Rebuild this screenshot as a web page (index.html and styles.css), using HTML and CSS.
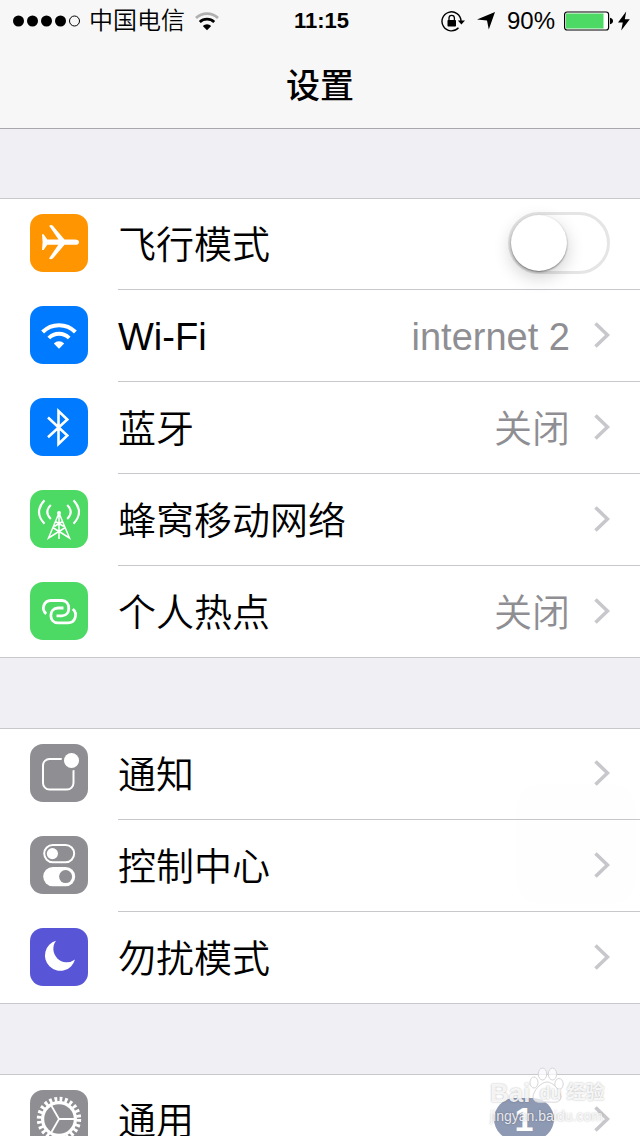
FILE: index.html
```html
<!DOCTYPE html>
<html lang="zh-CN">
<head>
    <meta charset="UTF-8">
    <meta name="viewport" content="width=device-width, initial-scale=1.0">
    <title>设置</title>
    <link rel="stylesheet" href="styles.css">
</head>
<body>
    <!-- shared chevron -->
    <svg class="defs" aria-hidden="true">
        <symbol id="chevron" viewBox="0 0 16 26">
            <path d="M1.5 1.5L13.5 13L1.5 24.5" fill="none" stroke="#c7c7cc" stroke-width="3.6"/>
        </symbol>
    </svg>

    <div class="screen">
        <header class="header">
            <div class="status-bar">
                <div class="status-left">
                    <svg class="signal" width="68" height="12" viewBox="0 0 68 12">
                        <circle cx="5.5" cy="6" r="5.5"/>
                        <circle cx="19.5" cy="6" r="5.5"/>
                        <circle cx="33.5" cy="6" r="5.5"/>
                        <circle cx="47.5" cy="6" r="5.5"/>
                        <circle cx="61.5" cy="6" r="5" fill="none" stroke="#000"/>
                    </svg>
                    <span class="carrier">中国电信</span>
                    <svg width="26" height="20" viewBox="0 0 26 20" fill="none">
                        <path d="M2 7A16 16 0 0 1 24 7" stroke="#b0b0b0" stroke-width="2.8"/>
                        <path d="M5.8 11A10.5 10.5 0 0 1 20.2 11" stroke="#000" stroke-width="2.8"/>
                        <path d="M13 19.2L8.8 15A6 6 0 0 1 17.2 15Z" fill="#000"/>
                    </svg>
                </div>
                <div class="time">11:15</div>
                <div class="status-right">
                    <svg width="24" height="22" viewBox="0 0 24 22">
                        <path d="M17.5 17.8A9.5 9.5 0 1 1 20 11" fill="none" stroke="#000" stroke-width="1.4"/>
                        <path d="M16.8 10.5H24L20.4 14.5Z"/>
                        <rect x="6.5" y="10" width="8.5" height="6.5" rx="0.8"/>
                        <path d="M8 10.5V8A2.7 2.7 0 0 1 13.4 8V10.5" fill="none" stroke="#000" stroke-width="1.3"/>
                    </svg>
                    <svg class="location" width="18" height="18" viewBox="0 0 18 18">
                        <path d="M18 0L11.8 17.5L10 8.5L0 7.6Z"/>
                    </svg>
                    <span class="percent">90%</span>
                    <svg width="50" height="20" viewBox="0 0 50 20">
                        <rect x="0.6" y="1" width="44" height="18" rx="2.5" fill="#fff" stroke="#000" stroke-width="1.2"/>
                        <rect x="2" y="2.5" width="37.5" height="15" fill="#4cd964"/>
                        <path d="M46 6.8Q49 7.5 49 10Q49 12.5 46 13.2Z"/>
                    </svg>
                    <svg class="bolt" width="12" height="20" viewBox="0 0 12 20">
                        <path d="M8.2 0.5L0 11.5H4.8L3.2 19.5L11.8 8.3H6.8Z"/>
                    </svg>
                </div>
            </div>
            <h1 class="title">设置</h1>
        </header>

        <main>
            <ul class="group">
                <li class="row">
                    <svg class="icon orange" viewBox="0 0 58 58">
                        <path d="M12 20.3H13.6L17.3 25.6H28.5L19.3 12Q19.3 11 21.5 11Q22.6 11.2 23.5 12.4L34.5 25.5H45Q49 25.7 49 28.2Q49 30.7 45 30.8H34.5L23.5 43.8Q22.5 45.2 21 45.2Q18.8 45.2 19.3 44L28.3 30.8H17.3L13.6 36H12L12.6 28.2Z" fill="#fff"/>
                    </svg>
                    <div class="cell">
                        <label class="label" for="airplane">飞行模式</label>
                        <input class="switch" type="checkbox" id="airplane">
                    </div>
                </li>
                <li>
                    <a class="row" href="#">
                        <svg class="icon blue" viewBox="0 0 58 58" fill="none" stroke="#fff">
                            <path d="M12.6 26A23 23 0 0 1 45.4 26" stroke-width="4"/>
                            <path d="M18.8 32A14.4 14.4 0 0 1 39.2 32" stroke-width="3.8"/>
                            <path d="M29 42.8L23.8 37.4A7.5 7.5 0 0 1 34.2 37.4Z" fill="#fff" stroke="none"/>
                        </svg>
                        <div class="cell">
                            <span class="label">Wi-Fi</span>
                            <span class="value">internet 2</span>
                            <svg class="chevron"><use href="#chevron"/></svg>
                        </div>
                    </a>
                </li>
                <li>
                    <a class="row" href="#">
                        <svg class="icon blue" viewBox="0 0 58 58" fill="none" stroke="#fff" stroke-width="2.6">
                            <path d="M18 19.5L37.3 37.5L28.5 46V13L37.3 21.5L18 39.2"/>
                        </svg>
                        <div class="cell">
                            <span class="label">蓝牙</span>
                            <span class="value">关闭</span>
                            <svg class="chevron"><use href="#chevron"/></svg>
                        </div>
                    </a>
                </li>
                <li>
                    <a class="row" href="#">
                        <svg class="icon green" viewBox="0 0 58 58" fill="none" stroke="#fff">
                            <path d="M14.5 10.3Q3.5 22 14.5 33.8M43.5 10.3Q54.5 22 43.5 33.8M20.8 15Q13.8 22 20.8 29M37.2 15Q44.2 22 37.2 29" stroke-width="2.1"/>
                            <circle cx="29" cy="23" r="2" fill="#fff" stroke="none"/>
                            <path d="M29 23L18.5 48L34.5 38M29 23L39.5 48L23.5 38M29 23V49M25.5 31.5L33.8 36.5M32.5 31.5L24.2 36.5" stroke-width="1.5"/>
                        </svg>
                        <div class="cell">
                            <span class="label">蜂窝移动网络</span>
                            <svg class="chevron"><use href="#chevron"/></svg>
                        </div>
                    </a>
                </li>
                <li>
                    <a class="row" href="#">
                        <svg class="icon green" viewBox="0 0 58 58" fill="none" stroke="#fff" stroke-width="2.8">
                            <path d="M16.2 31.8C11 27.5 13.5 18.5 21 18.5H32C41 18.5 41 33.8 32 33.8H26.5"/>
                            <path d="M42.8 27C48 31.5 45.5 40.8 38 40.8H28C18.5 40.8 18.5 26 28 26H33.5"/>
                        </svg>
                        <div class="cell">
                            <span class="label">个人热点</span>
                            <span class="value">关闭</span>
                            <svg class="chevron"><use href="#chevron"/></svg>
                        </div>
                    </a>
                </li>
            </ul>

            <ul class="group">
                <li>
                    <a class="row" href="#">
                        <svg class="icon gray" viewBox="0 0 58 58">
                            <rect x="13" y="15" width="30.5" height="30.5" rx="6.5" fill="none" stroke="#fff" stroke-width="2"/>
                            <circle cx="41.5" cy="16.5" r="10" fill="#8e8e93"/>
                            <circle cx="41.5" cy="16.5" r="7.5" fill="#fff"/>
                        </svg>
                        <div class="cell">
                            <span class="label">通知</span>
                            <svg class="chevron"><use href="#chevron"/></svg>
                        </div>
                    </a>
                </li>
                <li>
                    <a class="row" href="#">
                        <svg class="icon gray" viewBox="0 0 58 58">
                            <rect x="14.2" y="9" width="30" height="17.2" rx="8.6" fill="none" stroke="#fff" stroke-width="2"/>
                            <circle cx="22.4" cy="17.6" r="5.6" fill="#fff"/>
                            <rect x="13.2" y="31" width="32" height="19.2" rx="9.6" fill="#fff"/>
                            <circle cx="35.6" cy="40.6" r="6.5" fill="#8e8e93"/>
                        </svg>
                        <div class="cell">
                            <span class="label">控制中心</span>
                            <svg class="chevron"><use href="#chevron"/></svg>
                        </div>
                    </a>
                </li>
                <li>
                    <a class="row" href="#">
                        <svg class="icon purple" viewBox="0 0 58 58">
                            <path d="M26 12.8A15.3 15.3 0 1 0 45 31.6A13.5 13.5 0 0 1 26 12.8Z" fill="#fff"/>
                        </svg>
                        <div class="cell">
                            <span class="label">勿扰模式</span>
                            <svg class="chevron"><use href="#chevron"/></svg>
                        </div>
                    </a>
                </li>
            </ul>

            <ul class="group">
                <li>
                    <a class="row" href="#">
                        <svg class="icon gray" viewBox="0 0 58 58" fill="none" stroke="#fff">
                            <circle cx="29" cy="29" r="19.8" stroke-width="4.8" stroke-dasharray="2.8 2.384"/>
                            <circle cx="29" cy="29" r="16.4" stroke-width="3.2"/>
                            <path d="M29 29H44M29 29L21.5 16M29 29L21.5 42" stroke-width="1.8"/>
                        </svg>
                        <div class="cell">
                            <span class="label">通用</span>
                            <span class="badge">1</span>
                            <svg class="chevron"><use href="#chevron"/></svg>
                        </div>
                    </a>
                </li>
            </ul>
        </main>

        <button class="assistive" type="button" aria-label="AssistiveTouch"></button>

        <div class="watermark">
            <svg class="paw" width="36" height="36" viewBox="0 0 36 36">
                <ellipse cx="13.5" cy="7" rx="4.2" ry="6"/>
                <ellipse cx="23.5" cy="7" rx="4.2" ry="6"/>
                <ellipse cx="5" cy="15.500" rx="4" ry="5.5"/>
                <ellipse cx="30" cy="17" rx="4.2" ry="5.5"/>
                <path d="M18 15C24 15 32 24 32 30C31 37 24 35 18 35C12 35 5 37 4 30C4 24 12 15 18 15Z"/>
            </svg>
            <div class="brand"><span>Bai</span><span class="du">du</span><span class="jingyan">经验</span></div>
            <div class="site">jingyan.baidu.com</div>
        </div>
    </div>
</body>
</html>
```
FILE: styles.css
```css
body {
    margin: 0;
    background-color: #efeff4;
    font-family: "Liberation Sans", "Noto Sans CJK SC", sans-serif;
    color: #000;
}
.defs {
    display: none;
}
.screen {
    position: relative;
    height: 100vh;
    overflow: hidden;
}

/* Header */
.header {
    height: 128px;
    background: #f7f7f7;
    box-shadow: 0 1px 0 #a7a7ac;
}
.status-bar {
    display: grid;
    grid-template-columns: 1fr auto 1fr;
    align-items: center;
    height: 42px;
    padding: 0 10px 0 13px;
}
.status-left,
.status-right {
    display: flex;
    align-items: center;
}
.status-right {
    justify-content: flex-end;
}
.carrier {
    margin: 0 9px 0 8px;
    font-size: 24px;
    line-height: 42px;
    font-weight: 350;
}
.time {
    font-size: 22px;
    font-weight: bold;
}
.location {
    margin: 0 12px 0 12px;
}
.percent {
    margin-right: 9px;
    font-size: 24px;
}
.bolt {
    margin-left: 4px;
}
.title {
    margin: 0;
    font-size: 34px;
    line-height: 88px;
    font-weight: 500;
    text-align: center;
}

/* Lists */
.group {
    list-style: none;
    margin: 70px 0 0;
    padding: 0;
    background: #fff;
    box-shadow: inset 0 1px 0 #c8c7cc, inset 0 -1px 0 #c8c7cc;
}
.row {
    display: flex;
    height: 92px;
    padding-left: 30px;
    color: inherit;
    text-decoration: none;
}
.icon {
    flex: none;
    width: 58px;
    height: 58px;
    margin: 16px 30px 0 0;
    border-radius: 13px;
}
.orange {
    background: #ff9500;
}
.blue {
    background: #007aff;
}
.green {
    background: #4cd964;
}
.gray {
    background: #8e8e93;
}
.purple {
    background: #5856d6;
}
.cell {
    flex: 1;
    display: flex;
    align-items: center;
    box-sizing: border-box;
    padding: 0 30px 1px 0;
    border-bottom: 1px solid #c8c7cc;
}
.label {
    margin-right: auto;
}
.label,
.value {
    padding-top: 4px;
    font-size: 38px;
    line-height: 56px;
    font-weight: 350;
}
.value {
    color: #8e8e93;
}
.chevron {
    width: 16px;
    height: 26px;
    margin-left: 24px;
}
.badge {
    width: 60px;
    margin-right: 16px;
    border-radius: 21px;
    background: #8e99b3;
    color: #fff;
    font-size: 34px;
    line-height: 42px;
    font-weight: bold;
    text-align: center;
}

/* Switch */
.switch {
    appearance: none;
    box-sizing: border-box;
    width: 102px;
    height: 62px;
    margin: 0;
    border: 3px solid #e5e5e5;
    border-radius: 31px;
    background: #fff;
}
.switch::before {
    content: "";
    display: block;
    width: 56px;
    height: 56px;
    border-radius: 50%;
    background: #fff;
    box-shadow: 0 1px 2px rgba(0,0,0,0.45), 0 6px 18px rgba(0,0,0,0.2);
}
.switch:checked {
    background: #4cd964;
    border-color: #4cd964;
}
.switch:checked::before {
    margin-left: 40px;
}

/* Floating button, faded out when idle */
.assistive {
    position: absolute;
    right: 4px;
    top: 784px;
    width: 120px;
    height: 120px;
    border: 0;
    border-radius: 24px;
    background: rgba(0,0,0,0.004);
}

/* Watermark */
.watermark {
    position: absolute;
    right: 34px;
    top: 1067px;
    width: 116px;
    color: rgba(255,255,255,0.85);
    text-shadow: 0 0 2px rgba(0,0,0,0.3);
}
.paw {
    position: absolute;
    left: 39px;
    top: 0;
    fill: rgba(255,255,255,0.7);
    stroke: #d6d6da;
}
.brand {
    position: relative;
    display: flex;
    align-items: center;
    padding-top: 12px;
    font-size: 26px;
    line-height: 28px;
    font-weight: bold;
}
.du {
    margin-left: 9px;
    font-size: 18px;
}
.jingyan {
    margin-left: 5px;
    font-size: 19px;
}
.site {
    position: relative;
    font-size: 14px;
    line-height: 18px;
}
```
